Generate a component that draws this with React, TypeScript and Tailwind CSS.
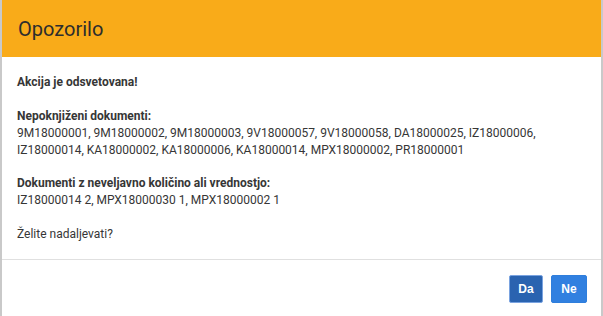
export default function App() {
  return (
    <div className="h-[316px] w-[603px] overflow-hidden bg-white">
      <div className="flex h-full flex-col border-x-2 border-[#c9c9c9] font-['Roboto',sans-serif] text-[#363636]">
        {/* Header */}
        <div className="flex h-[57px] shrink-0 items-center bg-[#f9ab19] px-4">
          <h1 className="text-[20px] leading-none text-[#2d2d2d]">Opozorilo</h1>
        </div>

        {/* Body */}
        <div className="border-b border-[#e0e0e0] px-[15px] pt-[17px] pb-[16px] text-[12px] leading-[16.9px]">
          <p className="font-bold">Akcija je odsvetovana!</p>
          <br />
          <p className="font-bold">Nepoknjiženi dokumenti:</p>
          <p>
            9M18000001, 9M18000002, 9M18000003, 9V18000057, 9V18000058, DA18000025, IZ18000006,
            <br />
            IZ18000014, KA18000002, KA18000006, KA18000014, MPX18000002, PR18000001
          </p>
          <br />
          <p className="font-bold">Dokumenti z neveljavno količino ali vrednostjo:</p>
          <p>IZ18000014 2, MPX18000030 1, MPX18000002 1</p>
          <br />
          <p>Želite nadaljevati?</p>
        </div>

        {/* Footer */}
        <div className="flex justify-end gap-2 pt-[15px] pr-[14px]">
          <button className="h-[28px] w-[34px] rounded-[2px] border border-[#7aa3e0] bg-[#2a63b0] font-['Liberation_Sans',sans-serif] text-[12px] font-bold text-white">
            Da
          </button>
          <button className="h-[28px] w-[36px] rounded-[2px] border border-[#2f7edc] bg-[#3180e0] font-['Liberation_Sans',sans-serif] text-[12px] font-bold text-white">
            Ne
          </button>
        </div>
      </div>
    </div>
  )
}
